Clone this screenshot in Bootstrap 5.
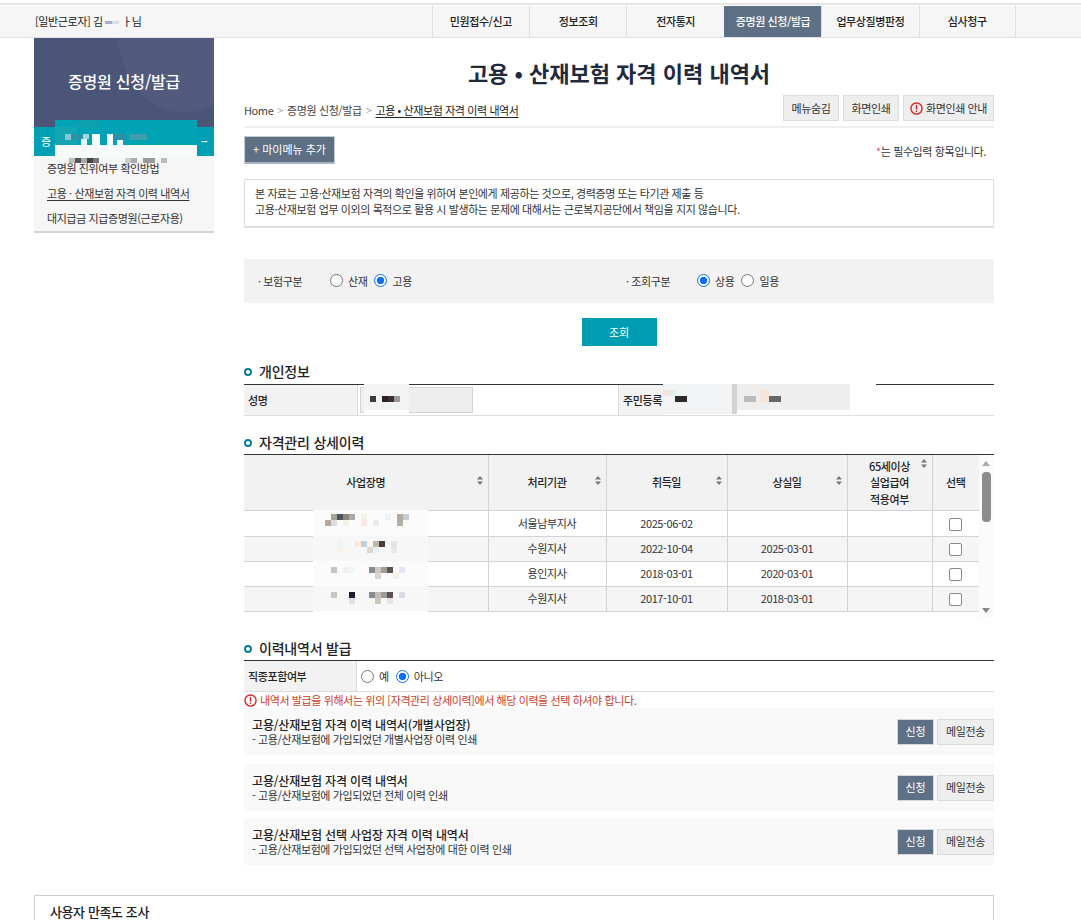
<!DOCTYPE html>
<html lang="ko">
<head>
<meta charset="utf-8">
<title>고용·산재보험 자격 이력 내역서</title>
<link href="https://cdn.jsdelivr.net/npm/bootstrap@5.3.0/dist/css/bootstrap.min.css" rel="stylesheet">
<style>
html,body{height:920px;overflow:hidden}
body{font-family:"Noto Sans CJK KR","Liberation Sans",sans-serif;font-size:11px;color:#333;background:#fff;letter-spacing:-.4px;line-height:1.3}
.strip{height:6px;background:linear-gradient(#fff 3px,#e4e4e4 3px,#e4e4e4 5px,#fff 5px)}
.topbar{height:32px;background:#f6f6f6;border-bottom:1px solid #e2e2e2}
.who{padding-left:35px;font-size:11px;color:#222}
.who svg{vertical-align:-1px}
.tnav{margin-left:auto;margin-right:65px}
.tnav a{display:flex;align-items:center;justify-content:center;width:97.4px;height:31px;border-left:1px solid #dedede;color:#222;text-decoration:none;font-size:11px;font-weight:500}
.tnav a:last-child{border-right:1px solid #dedede}
.tnav a.on{background:#5d7085;color:#fff;border-left-color:#5d7085}
.shell{padding-left:34px;gap:30px}
.side{width:180px;flex:none;position:relative;align-self:flex-start}
.side-head{height:89px;padding-bottom:3px;background:radial-gradient(ellipse 110px 140px at 150px -10px,#525b7e 60%,transparent 61%),#4a5578;color:#fff;font-size:16px;font-weight:500;letter-spacing:-.2px}
.side-open{height:29px;background:#00a0b4;color:#fff;padding:0 7px;font-size:11px}
.side-list{background:#f6f6f6;border-bottom:2px solid #d4d4d4;padding:0 13px;height:77px}
.side-list a{display:block;height:25px;line-height:25px;color:#333;text-decoration:none;white-space:nowrap}
.side-list a.cur{text-decoration:underline;text-underline-offset:2px}
.blot-side{position:absolute;left:21px;top:82px;width:142px;height:44px}
.mainc{width:750px;flex:none}
.page-title{font-size:22px;font-weight:700;color:#1f2a3d;text-align:center;margin:0;padding-top:18px;height:57px;line-height:32px;letter-spacing:0}
.crumbs{height:33px;border-bottom:2px solid #efefef;color:#444}
.crumbs .trail{padding-top:8px}
.crumbs b{font-weight:400;text-decoration:underline;text-underline-offset:2px;color:#222}
.crumbs .sep{color:#aaa;margin:0 4px}
.gbtn{height:26px;width:56px;padding:0;background:#eee;border:1px solid #dcdcdc;color:#333;font-size:11px;border-radius:0;letter-spacing:-.4px;line-height:1;display:inline-flex;align-items:center;justify-content:center}
.gbtn.w2{width:91px}
.gbtn.w3{width:57px}
.dbtn{height:26px;width:37px;background:#5d7085;border:1px solid #d8d8d8;color:#fff;font-size:11px;border-radius:0;padding:0;line-height:1}
.warn-ic{width:13px;height:13px;flex:none;margin-right:3px}
.mymenu{height:28px;width:91px;background:#5f7085;border:1px solid #c5ccd3;border-bottom:2px solid #aab3bd;color:#fff;font-size:11px;border-radius:0;padding:0;line-height:1}
.rownote{height:51px;padding-top:8px}
.star{color:#e0566f}
.notice{height:49px;border:1px solid #dedede;border-bottom-width:2px;padding:6px 10px;line-height:15.5px;color:#333}
.searchp{height:44px;background:#f2f2f2;margin-top:31px;padding:0 14px}
.searchp .half{width:368px;flex:none}
.searchp .half+.half{width:340px}
.lab{width:72px}
.lab.b{width:71px}
.form-check-input.rdo{width:13px;height:13px;margin:0 5px 0 0;border:1px solid #767676;flex:none;float:none}
.form-check-input.rdo:checked{background:radial-gradient(circle,#0d6efd 0 3.4px,#fff 4px);border-color:#0d6efd}
.rgroup label{margin-right:7px}
.query{display:block;width:75px;height:28px;background:#009cb2;color:#fff;border:0;border-radius:0;margin:15px auto 0;font-size:11px;padding:0}
.sec{font-size:14px;font-weight:500;color:#222;line-height:20px;margin:0;letter-spacing:-.2px}
.sec-dot{display:inline-block;width:8px;height:8px;border:2px solid #0a7d96;border-radius:50%;margin-right:7px;vertical-align:1px}
.s1{margin-top:15px}.s2{margin-top:16px}.s3{margin-top:21px}
.ptable{position:relative;border-top:1px solid #333;border-bottom:1px solid #ddd;height:32px;margin-top:3px}
.ptable .th1{width:114px;background:#f2f2f2;border-right:1px solid #ddd;padding-left:4px;font-weight:500;color:#222}
.fake-in{width:113px;height:26px;background:#eee;border:1px solid #d5d5d5;margin-left:2px;position:relative}
.ptable .th2{width:45px;background:#f2f2f2;border-left:1px solid #ddd;margin-left:145px;padding-left:4px;font-weight:500;color:#222;white-space:nowrap}
.bl1,.bl2,.bl3{position:absolute;top:-1px;height:30px}
.bl1{left:419px;width:69px}
.bl2{left:488px;width:5px;background:#d3d3d3}
.bl3{left:493px;width:113px}
.bl4{position:absolute;top:-1px;left:606px;width:26px;height:2px;background:#fff}
.blb{position:absolute;left:3px;top:-4px;width:45px;height:30px}
.gridwrap{position:relative;margin-top:2px;border-top:1px solid #333;height:163px}
.htable{width:735px;table-layout:fixed;border-collapse:collapse;margin:0;font-size:11px}
.htable th,.htable td{border:1px solid #d2d2d8;border-top:0;text-align:center;vertical-align:middle;padding:0;position:relative}
.htable th:first-child,.htable td:first-child{border-left:0}
.htable th{height:55px;background:#f2f2f2;font-weight:500;color:#222;line-height:16.5px}
.htable td{height:25px;color:#333}
.htable tbody tr:first-child td{height:26px}
.htable td:last-child,.htable th:last-child{border-right:0}
.htable tbody tr:nth-child(even) td{background:#f5f5f5}
.sorta{position:absolute;right:5px;top:21px;width:6px;height:9px}
.sorta.t{top:4px}
.chk.form-check-input{width:13px;height:13px;margin:0;border-color:#888;float:none;vertical-align:middle;border-radius:2px}
.blt{position:absolute;left:69px;top:-1px;width:115px;height:27px}
.sbar{position:absolute;right:0;top:0;width:15px;height:163px;background:#fbfbfb}
.sbar .thumb{position:absolute;left:3px;top:17px;width:9px;height:50px;background:#8c8c8c;border-radius:4px}
.sbar .up,.sbar .dn{position:absolute;left:3px;width:0;height:0;border-left:4px solid transparent;border-right:4px solid transparent}
.sbar .up{top:6px;border-bottom:5px solid #aaa}
.sbar .dn{bottom:5px;border-top:5px solid #888}
.ftable{border-top:1px solid #333;border-bottom:1px solid #ddd;height:32px;margin-top:2px}
.ftable .th1{width:113px;background:#f2f2f2;border-right:1px solid #ddd;padding-left:4px;font-weight:500;color:#222}
.errline{color:#c8401f;height:16px}
.docrow{height:47px;background:#f9f9f9;padding:0 0 0 8px;line-height:14px}
.docrow+.docrow{margin-top:9px}
.docrow+.docrow+.docrow{margin-top:7px}
.docrow h6{font-size:12px;font-weight:500;color:#222;margin:0;line-height:15px;letter-spacing:-.15px}
.gap3{gap:3px}
.survey{margin:30px 87px 0 34px;height:25px;border:1px solid #ccc;border-bottom:0;padding:8px 15px 0;font-size:13px;font-weight:500;color:#222;line-height:16px}
.c1{width:244px}.c2{width:118px}.c3{width:121px}.c4{width:120px}.c5{width:85px}.c6{width:47px}
</style>
</head>
<body>
<div class="strip"></div>
<div class="topbar d-flex align-items-start">
  <div class="who align-self-center">[일반근로자] 김 <svg width="14" height="6" viewBox="0 0 14 6"><rect width="7" height="3" fill="#a8b0c0"/><rect x="7" width="7" height="3" fill="#d8dce4"/></svg> ㅏ님</div>
  <nav class="tnav d-flex">
    <a href="#">민원접수/신고</a><a href="#">정보조회</a><a href="#">전자통지</a><a href="#" class="on">증명원 신청/발급</a><a href="#">업무상질병판정</a><a href="#">심사청구</a>
  </nav>
</div>
<div class="shell d-flex">
  <aside class="side">
    <div class="side-head d-flex align-items-center justify-content-center">증명원 신청/발급</div>
    <div class="side-open d-flex justify-content-between align-items-center"><span>증</span><span class="fw-bold">−</span></div>
    <div class="side-list">
      <a href="#">증명원 진위여부 확인방법</a>
      <a href="#" class="cur">고용 · 산재보험 자격 이력 내역서</a>
      <a href="#">대지급금 지급증명원(근로자용)</a>
    </div>
    <svg class="blot-side" viewBox="0 0 142 44"><rect width="142" height="25" fill="#00a3b3"/><rect y="25" width="142" height="13" fill="#f7fafa"/><rect x="0" y="7" width="22" height="18" fill="#14a5b5"/><rect x="22" y="0" width="22" height="8" fill="#0ca0ae"/><rect x="10" y="14" width="6" height="6" fill="#7fc8d2"/><rect x="16" y="14" width="12" height="6" fill="#2a93a8"/><rect x="26" y="19" width="6" height="6" fill="#e4f4f6"/><rect x="28" y="14" width="6" height="5" fill="#9fd8df"/><rect x="37" y="14" width="8" height="11" fill="#f4fbfb"/><rect x="52" y="14" width="6" height="11" fill="#f4fbfb"/><rect x="58" y="14" width="12" height="6" fill="#2a93a8"/><rect x="62" y="20" width="6" height="5" fill="#eef8f9"/><rect x="74" y="14" width="18" height="6" fill="#3d9eae"/><rect x="14" y="38" width="6" height="5" fill="#bbb"/><rect x="20" y="38" width="6" height="5" fill="#555"/><rect x="26" y="38" width="6" height="5" fill="#aaa"/><rect x="32" y="38" width="6" height="5" fill="#444"/><rect x="38" y="38" width="6" height="5" fill="#777"/><rect x="70" y="38" width="6" height="5" fill="#ccc"/><rect x="76" y="38" width="6" height="5" fill="#aaa"/><rect x="88" y="38" width="12" height="5" fill="#999"/><rect x="106" y="38" width="6" height="5" fill="#bbb"/></svg>
  </aside>
  <main class="mainc">
    <h1 class="page-title">고용 • 산재보험 자격 이력 내역서</h1>
    <div class="crumbs d-flex justify-content-between align-items-start">
      <div class="trail">Home<span class="sep">&gt;</span>증명원 신청/발급<span class="sep">&gt;</span><b>고용 • 산재보험 자격 이력 내역서</b></div>
      <div class="d-flex gap-1">
        <button class="btn gbtn">메뉴숨김</button>
        <button class="btn gbtn">화면인쇄</button>
        <button class="btn gbtn w2"><svg class="warn-ic" viewBox="0 0 14 14"><circle cx="7" cy="7" r="6" fill="none" stroke="#d6262c" stroke-width="1.5"/><rect x="6.2" y="3.2" width="1.6" height="5" fill="#d6262c"/><rect x="6.2" y="9.2" width="1.6" height="1.6" fill="#d6262c"/></svg>화면인쇄 안내</button>
      </div>
    </div>
    <div class="rownote d-flex justify-content-between align-items-start">
      <button class="btn mymenu">+ 마이메뉴 추가</button>
      <div class="pt-2 pe-2"><span class="star">*</span>는 필수입력 항목입니다.</div>
    </div>
    <div class="notice">본 자료는 고용·산재보험 자격의 확인을 위하여 본인에게 제공하는 것으로, 경력증명 또는 타기관 제출 등<br>고용·산재보험 업무 이외의 목적으로 활용 시 발생하는 문제에 대해서는 근로복지공단에서 책임을 지지 않습니다.</div>
    <div class="searchp d-flex align-items-center">
      <div class="half d-flex align-items-center rgroup">
        <span class="lab">· 보험구분</span>
        <input class="form-check-input rdo" type="radio" name="a" id="a1"><label for="a1">산재</label>
        <input class="form-check-input rdo" type="radio" name="a" id="a2" checked><label for="a2">고용</label>
      </div>
      <div class="half d-flex align-items-center rgroup">
        <span class="lab b">· 조회구분</span>
        <input class="form-check-input rdo" type="radio" name="b" id="b1" checked><label for="b1">상용</label>
        <input class="form-check-input rdo" type="radio" name="b" id="b2"><label for="b2">일용</label>
      </div>
    </div>
    <button class="btn query">조회</button>

    <h2 class="sec s1"><span class="sec-dot"></span>개인정보</h2>
    <div class="ptable d-flex align-items-stretch">
      <div class="th1 d-flex align-items-center">성명</div>
      <div class="d-flex align-items-center"><div class="fake-in"><svg class="blb" viewBox="0 0 45 30"><rect width="45" height="26" fill="#f3f3f3"/><rect y="26" width="45" height="4" fill="#fff"/><rect x="6" y="12" width="6" height="6" fill="#3d3a3d"/><rect x="18" y="12" width="6" height="6" fill="#2a2025"/><rect x="24" y="12" width="6" height="6" fill="#3a3035"/><rect x="30" y="12" width="6" height="6" fill="#999"/></svg></div></div>
      <div class="th2 d-flex align-items-center">주민등록</div>
      <svg class="bl1" viewBox="0 0 69 30"><rect width="69" height="30" fill="#f1f3f5"/><rect x="12" y="12" width="12" height="6" fill="#2b2b2b"/><rect y="6" width="6" height="6" fill="#fbe0da"/><rect x="6" y="6" width="6" height="6" fill="#e0efe6"/></svg>
      <div class="bl2"></div>
      <svg class="bl3" viewBox="0 0 113 30"><rect width="113" height="26" fill="#eee"/><rect y="26" width="113" height="4" fill="#fff"/><rect x="7" y="12" width="12" height="6" fill="#bbb"/><rect x="23" y="6" width="9" height="12" fill="#f5e6dc"/><rect x="32" y="12" width="12" height="6" fill="#666"/></svg>
      <div class="bl4"></div>
    </div>

    <h2 class="sec s2"><span class="sec-dot"></span>자격관리 상세이력</h2>
    <div class="gridwrap">
      <table class="htable">
        <colgroup><col class="c1"><col class="c2"><col class="c3"><col class="c4"><col class="c5"><col class="c6"></colgroup>
        <thead><tr>
          <th>사업장명<svg class="sorta" viewBox="0 0 6 9"><path d="M3 0 6 3.5H0zM3 9 0 5.5H6z" fill="#777"/></svg></th>
          <th>처리기관<svg class="sorta" viewBox="0 0 6 9"><path d="M3 0 6 3.5H0zM3 9 0 5.5H6z" fill="#777"/></svg></th>
          <th>취득일<svg class="sorta" viewBox="0 0 6 9"><path d="M3 0 6 3.5H0zM3 9 0 5.5H6z" fill="#777"/></svg></th>
          <th>상실일<svg class="sorta" viewBox="0 0 6 9"><path d="M3 0 6 3.5H0zM3 9 0 5.5H6z" fill="#777"/></svg></th>
          <th>65세이상<br>실업급여<br>적용여부<svg class="sorta t" viewBox="0 0 6 9"><path d="M3 0 6 3.5H0zM3 9 0 5.5H6z" fill="#777"/></svg></th>
          <th>선택</th>
        </tr></thead>
        <tbody>
          <tr><td><svg class="blt" viewBox="0 0 115 27"><rect width="115" height="27" fill="#fbfbfb"/><rect x="18" y="4" width="6" height="6" fill="#a9a49c"/><rect x="24" y="4" width="6" height="6" fill="#4a5560"/><rect x="30" y="4" width="6" height="6" fill="#8a8678"/><rect x="36" y="4" width="6" height="6" fill="#aaa"/><rect x="48" y="4" width="6" height="6" fill="#f6f2ea"/><rect x="72" y="4" width="6" height="6" fill="#eef3f3"/><rect x="84" y="4" width="6" height="6" fill="#b0aca0"/><rect x="90" y="4" width="6" height="6" fill="#c5ccd8"/><rect x="12" y="10" width="6" height="6" fill="#b8a89c"/><rect x="18" y="10" width="6" height="6" fill="#ddd"/><rect x="30" y="10" width="6" height="6" fill="#f6f2e2"/><rect x="48" y="10" width="6" height="6" fill="#fbe8e0"/><rect x="60" y="10" width="6" height="6" fill="#e8ebf0"/><rect x="84" y="10" width="6" height="6" fill="#b5afa5"/></svg></td><td>서울남부지사</td><td>2025-06-02</td><td></td><td></td><td><input class="form-check-input chk" type="checkbox" aria-label="선택"></td></tr>
          <tr><td><svg class="blt" viewBox="0 0 115 27"><rect width="115" height="27" fill="#f7f7f7"/><rect x="24" y="5" width="6" height="6" fill="#eef3f5"/><rect x="42" y="5" width="6" height="6" fill="#fbe8dc"/><rect x="48" y="5" width="6" height="6" fill="#c5d0dc"/><rect x="60" y="5" width="6" height="6" fill="#bbb6aa"/><rect x="66" y="5" width="6" height="6" fill="#4a3c3c"/><rect x="78" y="5" width="6" height="6" fill="#e4e4e0"/><rect x="24" y="11" width="6" height="6" fill="#fbf3ea"/><rect x="54" y="11" width="6" height="6" fill="#ddd6cc"/><rect x="60" y="11" width="6" height="6" fill="#e8f0f5"/><rect x="78" y="11" width="6" height="6" fill="#e8e8e8"/></svg></td><td>수원지사</td><td>2022-10-04</td><td>2025-03-01</td><td></td><td><input class="form-check-input chk" type="checkbox" aria-label="선택"></td></tr>
          <tr><td><svg class="blt" viewBox="0 0 115 27"><rect width="115" height="27" fill="#fbfbfb"/><rect x="18" y="6" width="6" height="6" fill="#c4c4c0"/><rect x="30" y="6" width="6" height="6" fill="#eef2f2"/><rect x="36" y="6" width="6" height="6" fill="#eef8fa"/><rect x="56" y="6" width="6" height="6" fill="#8a8a8e"/><rect x="62" y="6" width="6" height="6" fill="#d0c8bc"/><rect x="68" y="6" width="6" height="6" fill="#9c9c9c"/><rect x="74" y="6" width="6" height="6" fill="#5e5250"/><rect x="86" y="6" width="6" height="6" fill="#e8e4f0"/><rect x="62" y="12" width="6" height="6" fill="#ddd4cc"/><rect x="80" y="12" width="6" height="6" fill="#f5f0e6"/></svg></td><td>용인지사</td><td>2018-03-01</td><td>2020-03-01</td><td></td><td><input class="form-check-input chk" type="checkbox" aria-label="선택"></td></tr>
          <tr><td><svg class="blt" viewBox="0 0 115 27"><rect width="115" height="25" fill="#f7f7f7"/><rect y="25" width="115" height="2" fill="#fff"/><rect x="18" y="6" width="6" height="6" fill="#c8c8c8"/><rect x="36" y="6" width="6" height="6" fill="#1c2030"/><rect x="56" y="6" width="6" height="6" fill="#8a8a8e"/><rect x="62" y="6" width="6" height="6" fill="#c4bcb0"/><rect x="68" y="6" width="6" height="6" fill="#9c9c9c"/><rect x="74" y="6" width="6" height="6" fill="#5e5250"/><rect x="86" y="6" width="6" height="6" fill="#dcd8e8"/><rect x="36" y="12" width="6" height="6" fill="#dfe0e0"/><rect x="62" y="12" width="6" height="6" fill="#ccc6bc"/><rect x="74" y="12" width="6" height="6" fill="#e4e4e4"/></svg></td><td>수원지사</td><td>2017-10-01</td><td>2018-03-01</td><td></td><td><input class="form-check-input chk" type="checkbox" aria-label="선택"></td></tr>
        </tbody>
      </table>
      <div class="sbar"><div class="up"></div><div class="thumb"></div><div class="dn"></div></div>
    </div>

    <h2 class="sec s3"><span class="sec-dot"></span>이력내역서 발급</h2>
    <div class="ftable d-flex align-items-stretch">
      <div class="th1 d-flex align-items-center">직종포함여부</div>
      <div class="d-flex align-items-center rgroup ps-1">
        <input class="form-check-input rdo ms-0" type="radio" name="c" id="c1"><label for="c1">예</label>
        <input class="form-check-input rdo" type="radio" name="c" id="c2" checked><label for="c2">아니오</label>
      </div>
    </div>
    <div class="errline d-flex align-items-center"><svg class="warn-ic" viewBox="0 0 14 14"><circle cx="7" cy="7" r="6" fill="none" stroke="#d6262c" stroke-width="1.5"/><rect x="6.2" y="3.2" width="1.6" height="5" fill="#d6262c"/><rect x="6.2" y="9.2" width="1.6" height="1.6" fill="#d6262c"/></svg>내역서 발급을 위해서는 위의 [자격관리 상세이력]에서 해당 이력을 선택 하셔야 합니다.</div>
    <div class="docrow d-flex justify-content-between align-items-center">
      <div><h6>고용/산재보험 자격 이력 내역서(개별사업장)</h6>- 고용/산재보험에 가입되었던 개별사업장 이력 인쇄</div>
      <div class="d-flex gap3"><button class="btn dbtn">신청</button><button class="btn gbtn w3">메일전송</button></div>
    </div>
    <div class="docrow d-flex justify-content-between align-items-center">
      <div><h6>고용/산재보험 자격 이력 내역서</h6>- 고용/산재보험에 가입되었던 전체 이력 인쇄</div>
      <div class="d-flex gap3"><button class="btn dbtn">신청</button><button class="btn gbtn w3">메일전송</button></div>
    </div>
    <div class="docrow d-flex justify-content-between align-items-center">
      <div><h6>고용/산재보험 선택 사업장 자격 이력 내역서</h6>- 고용/산재보험에 가입되었던 선택 사업장에 대한 이력 인쇄</div>
      <div class="d-flex gap3"><button class="btn dbtn">신청</button><button class="btn gbtn w3">메일전송</button></div>
    </div>
  </main>
</div>
<div class="survey">사용자 만족도 조사</div>
</body>
</html>
